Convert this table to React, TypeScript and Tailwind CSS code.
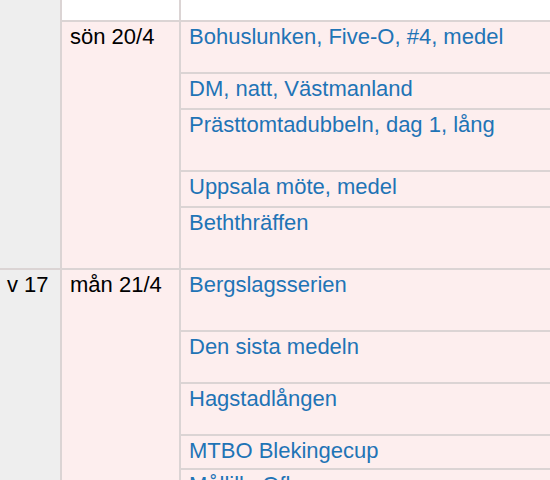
const weeks = [
  {
    week: "",
    days: [
      { day: "", header: true, events: [{ name: "", h: "h-[20px]" }] },
      {
        day: "sön 20/4",
        events: [
          { name: "Bohuslunken, Five-O, #4, medel", h: "h-[52px]" },
          { name: "DM, natt, Västmanland", h: "h-[36px]" },
          { name: "Prästtomtadubbeln, dag 1, lång", h: "h-[62px]" },
          { name: "Uppsala möte, medel", h: "h-[36px]" },
          { name: "Beththräffen", h: "h-[60px]", last: true },
        ],
      },
    ],
  },
  {
    week: "v 17",
    days: [
      {
        day: "mån 21/4",
        events: [
          { name: "Bergslagsserien", h: "h-[62px]" },
          { name: "Den sista medeln", h: "h-[52px]" },
          { name: "Hagstadlången", h: "h-[52px]" },
          { name: "MTBO Blekingecup", h: "h-[34px]" },
          { name: "Mållilla Ofk", h: "h-[40px]", last: true },
        ],
      },
    ],
  },
];

type Ev = { name: string; h: string; last?: boolean };
type Day = { day: string; header?: boolean; events: Ev[] };

function DayRow({ d, isLast }: { d: Day; isLast: boolean }) {
  const bg = d.header ? "bg-white" : "bg-[#fdeeee]";
  return (
    <div className={`flex ${isLast ? "" : "border-b-2 border-[#dbd4d4]"}`}>
      <div className={`w-[117px] shrink-0 ${bg} px-2 pt-[2px] text-black`}>{d.day}</div>
      <div className="w-[2px] shrink-0 bg-[#dbd4d4]" />
      <div className="flex-1">
        {d.events.map((e, i) => (
          <div
            key={i}
            className={`${e.h} ${bg} px-2 pt-[2px] text-[#1f74b6] ${i < d.events.length - 1 ? "border-b-2 border-[#dbd4d4]" : ""}`}
          >
            {e.name}
          </div>
        ))}
      </div>
    </div>
  );
}

export default function App() {
  return (
    <div className="h-[480px] w-[550px] overflow-hidden bg-[#fdeeee] font-['Liberation_Sans',Arial,sans-serif] text-[22px] leading-[25px]">
      {weeks.map((w, wi) => (
        <div key={wi} className="flex border-b-2 border-[#dbd4d4]">
          <div className="w-[60px] shrink-0 bg-[#eeeeee] pl-[7px] pt-[2px] text-black">{w.week}</div>
          <div className="w-[2px] shrink-0 bg-[#dbd4d4]" />
          <div className="flex-1">
            {w.days.map((d, di) => (
              <DayRow key={di} d={d} isLast={di === w.days.length - 1} />
            ))}
          </div>
        </div>
      ))}
    </div>
  );
}
